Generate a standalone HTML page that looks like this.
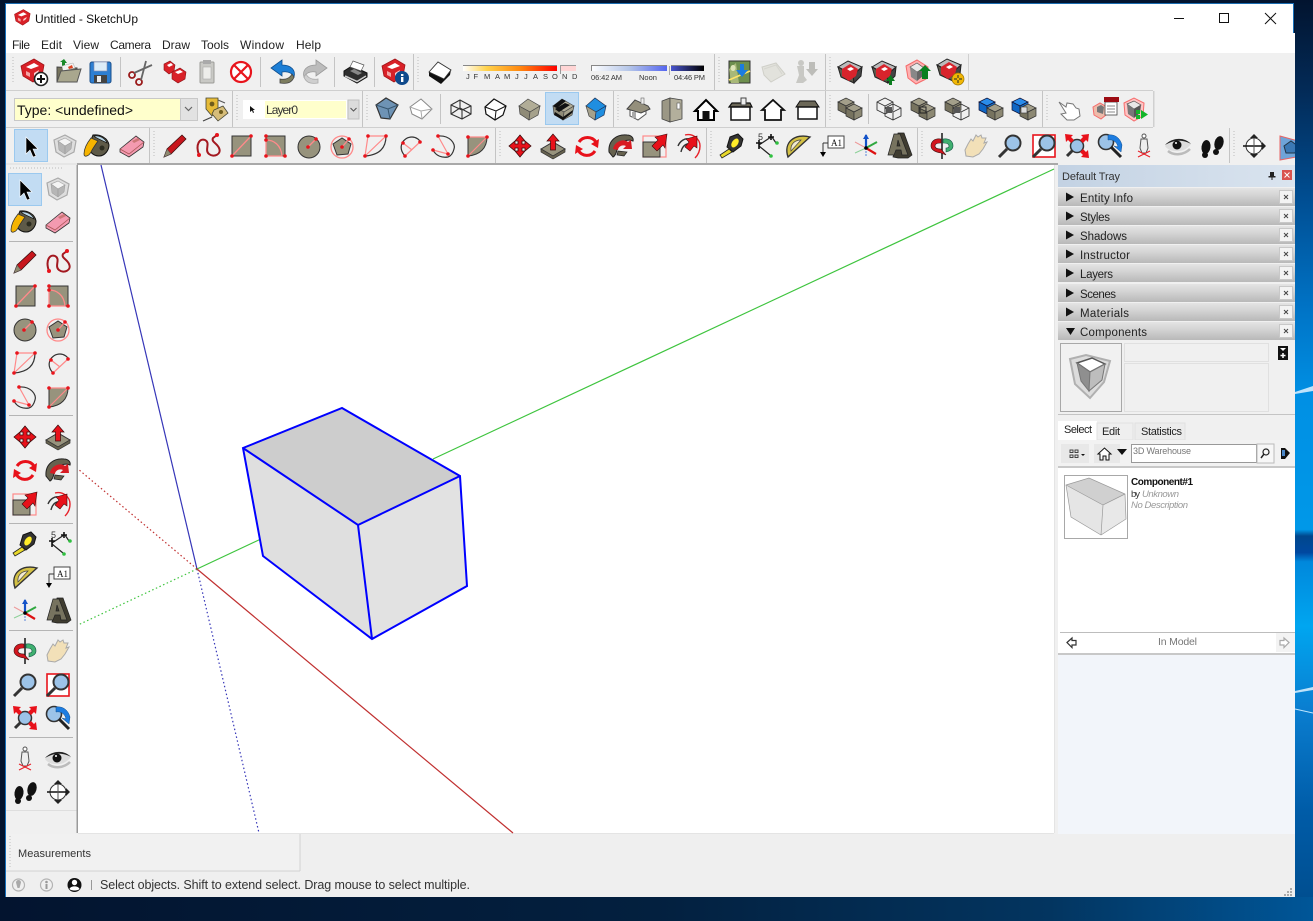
<!DOCTYPE html>
<html><head><meta charset="utf-8"><title>Untitled - SketchUp</title>
<style>
html,body{margin:0;padding:0;width:1313px;height:921px;overflow:hidden;background:#03142f}
svg{display:block}
text{font-family:"Liberation Sans",sans-serif;fill:#222}
</style></head><body>
<svg xmlns="http://www.w3.org/2000/svg" width="1313" height="921" viewBox="0 0 1313 921">
<defs>
<linearGradient id="bgR" x1="0" y1="0" x2="0" y2="1">
<stop offset="0" stop-color="#02142f"/><stop offset=".1" stop-color="#032b58"/><stop offset=".22" stop-color="#004f94"/><stop offset=".33" stop-color="#0072c4"/><stop offset=".43" stop-color="#0090e4"/><stop offset=".575" stop-color="#0098e8"/><stop offset=".582" stop-color="#00478c"/><stop offset=".6" stop-color="#0048a0"/><stop offset=".61" stop-color="#0088dc"/><stop offset=".68" stop-color="#00a6f0"/><stop offset=".77" stop-color="#0a7ed0"/><stop offset=".88" stop-color="#005ca8"/><stop offset="1" stop-color="#004b8a"/>
</linearGradient>
<linearGradient id="bgB" x1="0" y1="0" x2="1" y2="0">
<stop offset="0" stop-color="#03142f"/><stop offset=".5" stop-color="#03203f"/><stop offset=".8" stop-color="#033560"/><stop offset="1" stop-color="#005698"/>
</linearGradient>
<linearGradient id="bar" x1="0" y1="0" x2="0" y2="1"><stop offset="0" stop-color="#e4e4e4"/><stop offset=".45" stop-color="#d2d2d2"/><stop offset="1" stop-color="#b8b8b8"/></linearGradient>
<linearGradient id="hdr" x1="0" y1="0" x2="1" y2="0"><stop offset="0" stop-color="#c3d2e3"/><stop offset="1" stop-color="#dae4ef"/></linearGradient>
<linearGradient id="mon" x1="0" y1="0" x2="1" y2="0"><stop offset="0" stop-color="#fff"/><stop offset=".25" stop-color="#ffd34d"/><stop offset=".6" stop-color="#ff8a10"/><stop offset="1" stop-color="#f00"/></linearGradient>
<linearGradient id="tm1" x1="0" y1="0" x2="1" y2="0"><stop offset="0" stop-color="#fff"/><stop offset=".5" stop-color="#b5c6e8"/><stop offset="1" stop-color="#5566f0"/></linearGradient>
<linearGradient id="tm2" x1="0" y1="0" x2="1" y2="0"><stop offset="0" stop-color="#4a55d0"/><stop offset="1" stop-color="#000"/></linearGradient>

<g id="su"><path d="M-11,-4 L2,-11 L12,-5 L10,6 L1,12 L-9,6Z" fill="#d92128" stroke="#a01418" stroke-width=".8"/><path d="M-6,-3 L2,-7 L7,-4 L-1,-1Z" fill="#fff"/><path d="M-6,1 L-2,3 L-2,7 L-6,5Z" fill="#f4a5a5"/><path d="M2,3 L7,0 L6,3 L2,6Z" fill="#ffd0d0"/></g>
<g id="new"><use href="#su" x="-2" y="-2"/><circle cx="7" cy="7" r="6.5" fill="#fff" stroke="#222" stroke-width="1.6"/><path d="M3,7H11M7,3V11" stroke="#111" stroke-width="2"/></g>
<g id="open"><path d="M-11,-5 L-11,10 L9,10 L9,-4 Z" fill="#77745e" stroke="#444"/><path d="M-8,-10 L-4,-13 L-1,-9 L-3,-9 L-3,-6 L-6,-6 L-6,-10Z" fill="#1a8a2a"/><path d="M-6,-6 L5,-9 L7,-4 L-5,-1Z" fill="#f3f3f3" stroke="#aaa" stroke-width=".5"/><path d="M0,-5 L4,-7 L5,-4 L1,-3Z" fill="#d42"/><path d="M-11,10 L-7,-1 L13,-3 L9,10Z" fill="#a9a78e" stroke="#555"/></g>
<g id="save"><rect x="-10" y="-10" width="21" height="21" rx="2" fill="#2d7fd3" stroke="#1c4f8a"/><rect x="-6" y="-10" width="13" height="9" fill="#dcecf8" stroke="#88a"  stroke-width=".6"/><rect x="-6" y="3" width="13" height="8" fill="#444"/><rect x="-3" y="4" width="4" height="6" fill="#eee"/></g>
<g id="sci"><circle cx="-9" cy="3" r="3" fill="none" stroke="#9a1a1a" stroke-width="1.800"/><circle cx="-2" cy="10" r="3" fill="none" stroke="#9a1a1a" stroke-width="1.800"/><path d="M-7,1 L11,-7 M0,8 L5,-11" stroke="#666" stroke-width="1.800"/></g>
<g id="copy"><path d="M-11,-8 L-5,-11 L0,-7 L-1,-1 L-6,2 L-11,-2Z" fill="#d92128" stroke="#8c1014" stroke-width=".6"/><path d="M-8,-7 L-4,-9 L-2,-7 L-6,-5Z" fill="#fff"/><path d="M-3,0 L5,-4 L11,0 L10,7 L3,11 L-3,7Z" fill="#d92128" stroke="#8c1014" stroke-width=".6"/><path d="M0,0 L5,-2 L8,0 L3,2Z" fill="#fff"/></g>
<g id="paste"><rect x="-7" y="-10" width="14" height="21" rx="1" fill="#c9c9c5" stroke="#9c9c98"/><rect x="-4" y="-12" width="8" height="4" fill="#aaa"/><rect x="-4" y="-5" width="8" height="12" fill="#ededea" stroke="#aaa" stroke-width=".6"/></g>
<g id="erase"><circle r="10" fill="#fff" stroke="#e8141c" stroke-width="2.200"/><path d="M-6.500,-6.500L6.500,6.500M6.500,-6.500L-6.500,6.500" stroke="#e8141c" stroke-width="2.200"/></g>
<g id="undo"><path d="M-1,-12 L-1,-7 C8,-7 13,-2 11,5 C9,1 5,-1 -1,0 L-1,4 L-12,-4Z" fill="#1d7fd6" stroke="#0f4d8c" stroke-width=".8"/><path d="M11,5 C9,11 3,12 -3,11 L-3,7 C3,8 7,6 9,2Z" fill="#7d7d5f" stroke="#444" stroke-width=".8"/></g>
<g id="redo"><path d="M1,-12 L1,-7 C-8,-7 -13,-2 -11,5 C-9,1 -5,-1 1,0 L1,4 L12,-4Z" fill="#bcbcbc" stroke="#999" stroke-width=".8"/><path d="M-11,5 C-9,11 -3,12 3,11 L3,7 C-3,8 -7,6 -9,2Z" fill="#cfcfcf" stroke="#aaa" stroke-width=".8"/></g>
<g id="print"><path d="M-12,-1 L-4,-6 L11,1 L11,5 L1,11 L-12,4Z" fill="#2e2e2e" stroke="#111"/><path d="M-3,-11 L8,-7 L5,-1 L-6,-5Z" fill="#fff" stroke="#555" stroke-width=".7"/><path d="M-6,-1 L-2,-3 L6,1 L2,3Z" fill="#888"/><path d="M-11,4 L1,9.500 L10,4" fill="none" stroke="#cfcfcf" stroke-width="1.600"/></g>
<g id="info"><use href="#su" x="-3" y="-2"/><circle cx="6" cy="6" r="7" fill="#104a8c"/><rect x="5" y="5" width="2.400" height="5" fill="#fff"/><rect x="5" y="2" width="2.400" height="2" fill="#fff"/></g>
<g id="shad"><path d="M-11,-1 L4,6 L11,-3 L10,2 L1,11 L-11,3Z" fill="#111"/><path d="M-11,-1 L-2,-11 L11,-3 L4,6Z" fill="#fff" stroke="#333" stroke-width=".9"/></g>
<g id="loc"><rect x="-10" y="-11" width="21" height="22" fill="#6e8f4e" stroke="#333"/><path d="M-10,-3 L-3,-9 L0,11 L-8,11Z" fill="#a8b878"/><path d="M-10,8 L11,-1" stroke="#ffe36a" stroke-width="1.600"/><path d="M1,-8 H5 V-2 H9 L3,5 L-3,-2 H1Z" fill="#1c7ce0"/><path d="M-6,-7a2.500 3 0 1 0 .1 0" fill="#dfe5b8"/></g>
<g id="terr"><path d="M-11,-5 L3,-9 L12,2 L-2,10 L-9,3Z" fill="#e2e2dc" stroke="#cfcfc8"/><path d="M-9,-3 L3,-7 L9,2" fill="none" stroke="#d5d5cf"/></g>
<g id="photo"><circle cx="-5" cy="-9" r="3" fill="#c8c8c4"/><path d="M-9,-6 H-2 V4 L1,8 L-3,11 H-10 L-7,3Z" fill="#c8c8c4"/><path d="M3,-10 H9 V-3 H12 L6,4 L0,-3 H3Z" fill="#bdbdb9"/></g>
<g id="w1"><path d="M-12,-5 L-2,-11 L12,-5 L3,3Z" fill="#bbb" stroke="#222"/><path d="M-12,-5 L3,3 L4,11 L-9,5Z" fill="#5d5a4c" stroke="#222"/><path d="M3,3 L12,-5 L11,4 L4,11Z" fill="#444" stroke="#222"/><path d="M-8,-3 L0,-8 L8,-3 L6,4 L-1,9 L-8,4Z" fill="#d8242c"/><path d="M-3,-3 L1,-5 L4,-3 L0,-1Z" fill="#fff"/></g>
<g id="w2"><use href="#w1"/><path d="M4,2 H7 V6 H10 L5.500,12 L1,6 H4Z" transform="translate(1,1) rotate(180 5.500 7)" fill="#0b7d1f"/></g>
<g id="w3"><path d="M-11,-6 L0,-12 L11,-5 L9,7 L-1,12 L-9,6Z" fill="#ffb0b0" stroke="#f56b6b"/><path d="M-7,-5 L0,-9 L7,-4 L0,0Z" fill="#e8e8e8" stroke="#555" stroke-width=".7"/><path d="M-7,-5 L0,0 L0,9 L-6,5Z" fill="#888"/><path d="M0,0 L7,-4 L6,4 L0,9Z" fill="#666"/><path d="M8,-7 L14,-1 H11 V7 H5 V-1 H2Z" fill="#0b8020"/></g>
<g id="w4"><use href="#w1" x="-2" y="-2"/><circle cx="7" cy="7" r="6" fill="#f2b705" stroke="#9a7400" stroke-width=".7"/><path d="M3,7 H6 M8,7 H11 M7,3 V6 M7,8V11" stroke="#442" stroke-width="1.200"/></g>
<g id="tags"><path d="M-9,-11 L3,-11 L3,0 L-3,7 L-9,0Z" fill="#e6bb38" stroke="#443" stroke-width=".8"/><circle cx="-3" cy="-5" r="2.400" fill="#6e5c1c"/><path d="M-1,1 L8,-3 L13,4 L3,12 L-3,5Z" fill="#d6bd7a" stroke="#443" stroke-width=".8"/><circle cx="6" cy="3" r="2" fill="#6e5c1c"/><path d="M3,-9 L10,-6" stroke="#555"/><path d="M-12,12 L-3,8" stroke="#444" stroke-width="1.200"/></g>
<g id="xray"><path d="M-11,-4 L-1,-11 L11,-4 L3,10 L-6,9Z" fill="#6e93b5" stroke="#333" stroke-width="1.200"/><path d="M-11,-4 L1,0 L11,-4 M1,0 L3,10" stroke="#37566f" fill="none" stroke-width="1"/></g>
<g id="back"><path d="M-11,-2 L0,-10 L11,0 L1,10 L-9,5Z" fill="#fff" stroke="#888"/><path d="M-11,-2 L0,2 L11,0 M0,2 L1,10" stroke="#aaa" fill="none"/></g>
<g id="wire"><path d="M-10,-4 L-1,-9 L10,-3 L10,5 L1,10 L-10,5Z M-10,-4 L1,1 L10,-3 M1,1 V10 M-1,-9 V-1 L-10,5 M-1,-1 L10,5" fill="none" stroke="#333" stroke-width="1.100"/></g>
<g id="hid"><path d="M-10,-2 L-1,-10 L11,-3 L8,6 L0,11 L-9,5Z" fill="#fff" stroke="#111" stroke-width="1.200"/><path d="M-10,-2 L1,2 L11,-3 M1,2 L0,11" fill="none" stroke="#111"/></g>
<g id="shd"><path d="M-10,-3 L-1,-10 L11,-3 L1,3Z" fill="#b1ad97" stroke="#444" stroke-width=".7"/><path d="M-10,-3 L1,3 L0,11 L-9,5Z" fill="#8f8b78" stroke="#444" stroke-width=".7"/><path d="M1,3 L11,-3 L9,6 L0,11Z" fill="#a5a18c" stroke="#444" stroke-width=".7"/></g>
<g id="tex"><use href="#shd"/><path d="M-10,-3 L-1,-10 L3,-8 L-6,-1Z M-8,0 L2,-6 L7,-4 L-4,3 Z M-8,3 L0,8 L10,1 L9,4 L0,11 L-9,6Z" fill="#111"/></g>
<g id="mono"><path d="M-9,-3 L0,-11 L11,-3 L1,3Z" fill="#1f8ee0" stroke="#235" stroke-width=".7"/><path d="M-9,-3 L1,3 L0,11 L-6,7Z" fill="#a5a18c" stroke="#444" stroke-width=".7"/><path d="M1,3 L11,-3 L9,6 L0,11Z" fill="#1f8ee0" stroke="#235" stroke-width=".7"/></g>
<g id="h1"><path d="M-8,-1 L-8,7 L0,11 L8,5 L8,-1 L2,3Z" fill="#fff" stroke="#555"/><path d="M-11,0 L-3,-9 L10,-3 L12,0 L3,4 Z" fill="#948f7c" stroke="#444"/><rect x="-6" y="3" width="4" height="6" fill="#aaa"/><rect x="3" y="-11" width="3" height="6" fill="#eee" stroke="#666" stroke-width=".6"/></g>
<g id="h2"><path d="M-11,-8 L-3,-11 L-3,13 L-11,10Z" fill="#9b9785" stroke="#444" stroke-width=".8"/><path d="M-3,-11 L9,-9 L9,10 L-3,13Z" fill="#b3af9c" stroke="#444" stroke-width=".8"/><rect x="4" y="-6" width="3" height="6" fill="#fff" stroke="#555" stroke-width=".6"/></g>
<g id="h3"><path d="M-11,2 L0,-9 L11,2 L8,2 L8,11 L-8,11 L-8,2Z" fill="#fff" stroke="#000" stroke-width="2"/><rect x="-3.500" y="2" width="7" height="9" fill="#111"/></g>
<g id="h4"><path d="M-11,-2 L-8,-6 L10,-6 L12,-2Z" fill="#6b6757" stroke="#111" stroke-width="1.200"/><rect x="-9" y="-2" width="19" height="13" fill="#fff" stroke="#111" stroke-width="1.500"/><rect x="1" y="-11" width="5" height="7" fill="#eee" stroke="#444"/></g>
<g id="h5"><path d="M-11,1 L0,-9 L11,1 L8,1 L8,11 L-8,11 L-8,1Z" fill="#fff" stroke="#111" stroke-width="1.800"/></g>
<g id="h6"><path d="M-11,-2 L-7,-8 L8,-8 L12,-2Z" fill="#6b6757" stroke="#111"/><rect x="-9" y="-2" width="19" height="12" fill="#fff" stroke="#111" stroke-width="1.500"/></g>

<g id="c1"><path d="M-8,-4 L0,-8 L8,-4 L0,0Z" fill="#a39f8a" stroke="#333" stroke-width=".7"/><path d="M-8,-4 L0,0 L0,8 L-8,4Z" fill="#77735f" stroke="#333" stroke-width=".7"/><path d="M0,0 L8,-4 L8,4 L0,8Z" fill="#8c8873" stroke="#333" stroke-width=".7"/></g>
<g id="c2"><path d="M-8,-4 L0,-8 L8,-4 L0,0Z" fill="#2a8cea" stroke="#113" stroke-width=".7"/><path d="M-8,-4 L0,0 L0,8 L-8,4Z" fill="#0f66c4" stroke="#113" stroke-width=".7"/><path d="M0,0 L8,-4 L8,4 L0,8Z" fill="#1478dc" stroke="#113" stroke-width=".7"/></g>
<g id="c3"><path d="M-8,-4 L0,-8 L8,-4 L8,4 L0,8 L-8,4Z M-8,-4 L0,0 L8,-4 M0,0 V8" fill="none" stroke="#333" stroke-width=".9"/></g>
<g id="s0"><use href="#c1" x="-4" y="-3"/><use href="#c1" x="4" y="3"/></g>
<g id="s1"><use href="#c3" x="-4" y="-3"/><use href="#c3" x="4" y="3"/><rect x="-3" y="-2" width="6" height="6" fill="#555"/></g>
<g id="s2"><use href="#s0"/><rect x="-3" y="-2" width="6" height="6" fill="none" stroke="#222"/></g>
<g id="s3"><use href="#c1" x="-4" y="-3"/><use href="#c3" x="4" y="3"/><rect x="-3" y="-2" width="6" height="6" fill="#555"/></g>
<g id="s4"><use href="#c2" x="-4" y="-3"/><use href="#c1" x="4" y="3"/></g>
<g id="s5"><use href="#s4"/><rect x="-3" y="-2" width="6" height="6" fill="#ddd" stroke="#333" stroke-width=".6"/></g>
<g id="hand0"><path d="M-11,-8 L-4,-3 L-3,-7 L3,-6 L6,-2 L9,-1 L10,6 L4,10 L-3,10 L-9,4 L-4,3 Z" fill="#fff" stroke="#777"/></g>
<g id="cw1"><path d="M-12,-2 L-5,-6 L2,-2 L1,6 L-4,10 L-11,6Z" fill="#eba" stroke="#f56b6b"/><path d="M-8,-2 L-4,-4 L-1,-2 L-2,5 L-8,3Z" fill="#777"/><rect x="0" y="-7" width="12" height="13" fill="#fff" stroke="#444" stroke-width=".8"/><path d="M2,-3H10M2,0H10M2,3H10" stroke="#888"/><rect x="-1" y="-12" width="15" height="5" fill="#9c0b12"/></g>
<g id="cw2"><path d="M-11,-6 L-1,-11 L9,-6 L8,7 L-1,12 L-10,6Z" fill="#ffc4c4" stroke="#f56b6b"/><path d="M-8,-5 L-1,-8 L6,-4 L-1,0Z" fill="#e8e8e8" stroke="#555" stroke-width=".7"/><path d="M-8,-5 L-1,0 L-1,9 L-7,5Z" fill="#777"/><path d="M-1,0 L6,-4 L5,4 L-1,9Z" fill="#555"/><rect x="1" y="1" width="4" height="4" fill="#12b52a"/><rect x="1" y="6" width="4" height="4" fill="#12b52a"/><path d="M6,1 L13,5.500 L6,10Z" fill="#12b52a"/></g>

<g id="arrow"><path d="M-5,-10 L-5,7 L-1,3 L2,10 L5,9 L2,2 L7,2Z" fill="#000" stroke="#fff" stroke-width=".6"/></g>
<g id="comp"><path d="M-11,-6 L0,-11 L11,-5 L9,6 L-1,11 L-9,6Z" fill="#dedede" stroke="#a9a9a9" stroke-width="1.200"/><path d="M-7,-5 L0,-8 L7,-4 L0,0Z" fill="#f4f4f4" stroke="#aaa" stroke-width=".7"/><path d="M-7,-5 L0,0 L0,8 L-6,4Z M0,0 L7,-4 L6,3 L0,8Z" fill="#b6b6b6" stroke="#999" stroke-width=".5"/></g>
<g id="paint"><path d="M-4,-11 C3,-12 11,-8 12,-1 C12,4 8,10 2,10 C-4,10 -9,5 -8,-1Z" fill="#5e5a48" stroke="#111"/><path d="M-3,-10 C2,-11 8,-8 10,-3 C5,-6 0,-7 -3,-10Z" fill="#bbd8e8" stroke="#111" stroke-width=".7"/><path d="M-6,-8 C-10,-3 -13,2 -13,8 C-13,12 -8,10 -6,6 C-4,2 -1,-2 1,-5Z" fill="#f6b400" stroke="#333" stroke-width=".8"/><circle cx="5" cy="2" r="2.500" fill="#2c2c20"/></g>
<g id="eraser"><path d="M-12,3 L4,-10 L12,-4 L11,1 L-3,11 L-12,6Z" fill="#f49ab0" stroke="#333" stroke-width=".8"/><path d="M-12,3 L-3,8 L12,-4" fill="none" stroke="#a55" stroke-width=".8"/><path d="M0,-5 L6,-8 L8,-6 L2,-3Z" fill="#c77"/></g>
<g id="pencil"><path d="M-11,11 L-8,3 L7,-11 L11,-7 L-4,8Z" fill="#c8161d" stroke="#401010" stroke-width=".8"/><path d="M-11,11 L-8,3 L-4,8Z" fill="#8f8a70" stroke="#444" stroke-width=".5"/></g>
<g id="free"><path d="M-9,9 C-13,-2 -8,-8 -3,-6 C3,-3 -4,4 1,8 C6,12 14,8 11,2 C9,-3 3,-4 5,-8 L9,-11" fill="none" stroke="#a31820" stroke-width="2"/><circle cx="-9" cy="9" r="2" fill="#e8141c"/><circle cx="9" cy="-11" r="2" fill="#e8141c"/></g>
<g id="rect"><rect x="-9" y="-10" width="19" height="20" fill="#97937d" stroke="#333"/><path d="M-9,10 L10,-10" stroke="#ff8a8a" stroke-width="1.300"/><circle cx="-9" cy="10" r="1.800" fill="#e8141c"/><circle cx="10" cy="-10" r="1.800" fill="#e8141c"/></g>
<g id="rrect"><rect x="-9" y="-10" width="19" height="20" fill="#97937d" stroke="#333"/><path d="M-9,-6 C-1,-6 6,-1 7,10 H-9 Z" fill="none" stroke="#ff8a8a" stroke-width="1.300"/><circle cx="-9" cy="-10" r="1.800" fill="#e8141c"/><circle cx="-9" cy="-6" r="1.800" fill="#e8141c"/><circle cx="-9" cy="10" r="1.800" fill="#e8141c"/><circle cx="10" cy="10" r="1.800" fill="#e8141c"/></g>
<g id="circ"><circle r="11" cy="1" fill="#97937d" stroke="#333"/><path d="M-1,1 L7,-7" stroke="#ff8a8a" stroke-width="1.300"/><circle cx="-1" cy="1" r="1.800" fill="#e8141c"/><circle cx="7" cy="-7" r="1.800" fill="#e8141c"/></g>
<g id="poly"><circle r="11" cy="1" fill="none" stroke="#ff8a8a" stroke-width="1.300"/><path d="M-9,-2 L0,-8 L9,-2 L6,8 L-5,9Z" fill="#97937d" stroke="#333"/><path d="M0,1 L7,-7" stroke="#ff8a8a" stroke-width="1.300"/><circle cy="1" r="1.800" fill="#e8141c"/><circle cx="7" cy="-7" r="1.800" fill="#e8141c"/></g>
<g id="arc1"><path d="M-11,10 C3,9 10,2 10,-10" fill="none" stroke="#333" stroke-width="1.200"/><path d="M-8,-10 H10 L-11,10 Z" fill="none" stroke="#ff8a8a" stroke-width="1.200"/><circle cx="-8" cy="-10" r="1.800" fill="#e8141c"/><circle cx="10" cy="-10" r="1.800" fill="#e8141c"/><circle cx="-11" cy="10" r="1.800" fill="#e8141c"/></g>
<g id="arc2"><path d="M-5,10 C-13,1 -7,-9 2,-9 C6,-9 10,-6 10,-4" fill="none" stroke="#333" stroke-width="1.200"/><path d="M-5,10 L10,-4 M-7,-3 L2,4" fill="none" stroke="#ff8a8a" stroke-width="1.200"/><circle cx="-5" cy="10" r="1.800" fill="#e8141c"/><circle cx="10" cy="-4" r="1.800" fill="#e8141c"/><circle cx="-7" cy="-3" r="1.800" fill="#e8141c"/></g>
<g id="arc3"><path d="M-6,-10 C6,-11 12,-2 10,3 C9,7 7,10 4,11" fill="none" stroke="#333" stroke-width="1.200"/><path d="M-6,-10 L4,8 L-11,4" fill="none" stroke="#ff8a8a" stroke-width="1.200"/><path d="M-11,4 C-8,10 -2,12 4,11" fill="none" stroke="#333" stroke-width="1.200"/><circle cx="-6" cy="-10" r="1.800" fill="#e8141c"/><circle cx="4" cy="8" r="1.800" fill="#e8141c"/><circle cx="-11" cy="4" r="1.800" fill="#e8141c"/></g>
<g id="pie"><path d="M-9,-9 H10 C10,2 3,9 -9,10Z" fill="#97937d" stroke="#333"/><path d="M-9,10 L10,-9 M-9,-9 H10" stroke="#ff8a8a" stroke-width="1.200"/><circle cx="-9" cy="-9" r="1.800" fill="#e8141c"/><circle cx="10" cy="-9" r="1.800" fill="#e8141c"/><circle cx="-9" cy="10" r="1.800" fill="#e8141c"/></g>
<g id="move"><path d="M0,-11 L-5,-5 H-2 V-2 H-5 V-5 L-11,0 L-5,5 V2 H-2 V5 H-5 L0,11 L5,5 H2 V2 H5 V5 L11,0 L5,-5 V-2 H2 V-5 H5Z" fill="#e8111a" stroke="#3a0a0a" stroke-width=".8"/></g>
<g id="push"><path d="M-12,3 L0,-4 L12,3 L0,10Z" fill="#97937d" stroke="#333"/><path d="M-12,3 V6 L0,13 L12,6 V3 L0,10Z" fill="#66624f" stroke="#333" stroke-width=".7"/><path d="M0,-12 L-6,-5 H-2.500 V4 H2.500 V-5 H6Z" fill="#e8111a" stroke="#3a0a0a" stroke-width=".7"/></g>
<g id="rot"><path d="M-8,-4 C-4,-10 5,-10 9,-4" fill="none" stroke="#e8111a" stroke-width="3"/><path d="M12,-7 L11,2 L4,-2Z" fill="#e8111a"/><path d="M8,5 C4,11 -5,11 -9,4" fill="none" stroke="#e8111a" stroke-width="3"/><path d="M-12,8 L-11,-1 L-4,3Z" fill="#e8111a"/></g>
<g id="fol"><path d="M-12,6 C-13,-6 -4,-12 6,-11 C10,-11 13,-8 12,-5 C8,-7 -3,-5 -4,3 C-4,6 -6,10 -8,11 Z" fill="#66624f" stroke="#222"/><path d="M-8,3 C-7,-4 2,-8 7,-4 L10,-6 L11,3 L2,3 L5,0 C1,-2 -3,1 -3,4 Z" fill="#d81b22"/><path d="M-3,5 L6,6 L3,10 L-4,9Z" fill="#66624f" stroke="#222" stroke-width=".7"/></g>
<g id="scale"><rect x="-12" y="-10" width="23" height="21" fill="none" stroke="#ff8a8a" stroke-width="1.200"/><rect x="-12" y="-4" width="17" height="15" fill="#97937d" stroke="#333"/><path d="M12,-12 L0,-9 L3,-6 L-3,0 L2,5 L8,-1 L10,2Z" fill="#e8111a" stroke="#3a0a0a" stroke-width=".6"/></g>
<g id="offs"><path d="M-3,-11 C5,-13 12,-7 12,0 C12,5 10,9 7,12" fill="none" stroke="#e8222a" stroke-width="1.400"/><path d="M-10,0 C-8,-5 -3,-8 0,-7 M-7,6 C-6,1 -3,-2 0,-2" fill="none" stroke="#333" stroke-width="1.400"/><path d="M9,-10 L-2,-7 L1,-4 L-3,1 L2,5 L6,0 L9,2Z" fill="#e8111a" stroke="#3a0a0a" stroke-width=".6"/></g>
<g id="tape"><path d="M-2,-9 L6,-12 L11,-7 L9,0 L1,6 L-5,1Z" fill="#333" stroke="#111"/><ellipse cx="3" cy="-3" rx="3" ry="5" transform="rotate(35 3 -3)" fill="#ffec29"/><path d="M-3,3 L-12,9 L-10,12 L0,6Z" fill="#e8d82a" stroke="#222" stroke-width=".8"/></g>
<g id="guide"><path d="M-6,-1 L6,-9 M-6,0 L5,9 M7,-9 L11,-3" stroke="#222" stroke-width="1.200" fill="none"/><path d="M-9,-3 H-3 M-6,-6 V3 M3,-9 H9 M6,-12 V-6" stroke="#111" stroke-width="1.600"/><circle cx="6" cy="10" r="1.800" fill="#30c040"/><circle cx="12" cy="-3" r="1.800" fill="#30c040"/><text x="-7" y="-6" font-size="9" style="fill:#333">5</text></g>
<g id="prot"><path d="M-10,11 C-15,-4 -3,-13 12,-9 Z" fill="#d4c145" stroke="#333" stroke-width="1.400"/><path d="M-7,5 C-8,-2 -3,-6 3,-6 Z" fill="#f2ead0" stroke="#444" stroke-width=".7"/></g>
<g id="txt"><rect x="-4" y="-10" width="16" height="12" fill="#fff" stroke="#444"/><text x="-1" y="0" font-size="9" style="font-family:'Liberation Serif',serif;fill:#111">A1</text><path d="M-9,-3 V7 M-4,-3 H-9" stroke="#333"/><path d="M-12,6 H-6 L-9,11Z" fill="#000"/></g>
<g id="axes"><path d="M0,2 V-11" stroke="#1252c8" stroke-width="2.200"/><path d="M-3,-7 L0,-12 L3,-7Z" fill="#1252c8"/><path d="M0,2 V11" stroke="#8aa7e0" stroke-width="1.500" stroke-dasharray="2 1"/><path d="M0,2 L11,-4" stroke="#30a840" stroke-width="2"/><path d="M0,2 L-11,7" stroke="#8cd098" stroke-width="1"/><path d="M0,2 L10,8" stroke="#dd1111" stroke-width="2.200"/><path d="M0,2 L-11,-4" stroke="#ee9999" stroke-width="1"/><circle cy="2" r="1.800" fill="#000"/></g>
<g id="t3d"><path d="M-6,11 L-1,-13 L5,-13 L13,9 L9,12 L-1,12Z" fill="#3f3c30" stroke="#222" stroke-width=".7"/><path fill-rule="evenodd" d="M-11,9 L-5,-12 L1,-12 L9,9 L3,9 L2,4 L-3,4 L-5,9Z M-2,0 L1,0 L-1,-6Z" fill="#77735f" stroke="#222" stroke-width=".7"/></g>
<g id="orbit"><path d="M0,-13 V13" stroke="#222" stroke-width="1.600"/><path d="M-1,-7 C-8,-8 -11,-4 -11,0 C-11,3 -8,6 -1,7 L4,9 L-1,3 C-5,3 -7,2 -7,0 C-7,-2 -5,-3 -1,-3Z" fill="#d2161e" stroke="#411" stroke-width=".6"/><path d="M1,-7 C8,-8 11,-4 11,0 C11,3 8,5 4,6 L4,2 C6,2 7,1 7,0 C7,-2 5,-3 1,-3Z" fill="#40b070" stroke="#154" stroke-width=".6"/></g>
<g id="pan"><path d="M-10,10 L-11,4 L-8,-2 L-5,-7 L-3,-5 L0,-11 L2,-9 L5,-11 L6,-8 L10,-8 L8,-3 L11,-4 L7,3 L3,8 L-3,11Z" fill="#f2e0b8" stroke="#aaa"/></g>
<g id="zoom"><circle cx="3" cy="-3" r="7.500" fill="#9cc3e8" stroke="#333" stroke-width="2"/><path d="M-3,3 L-11,11" stroke="#333" stroke-width="3"/></g>
<g id="zoomw"><rect x="-11" y="-11" width="22" height="22" fill="#fff" stroke="#e8141c" stroke-width="1.600"/><use href="#zoom"/></g>
<g id="zoome"><path d="M-3,3 L-10,10" stroke="#333" stroke-width="3"/><circle cx="0" cy="0" r="6.500" fill="#9cc3e8" stroke="#333" stroke-width="1.500"/><path d="M-12,-12 L-4,-11 L-6,-9 L-3,-6 L-6,-3 L-9,-6 L-11,-4Z M12,-12 L4,-11 L6,-9 L3,-6 L6,-3 L9,-6 L11,-4Z M12,12 L4,11 L6,9 L3,6 L6,3 L9,6 L11,4Z" fill="#e8111a"/></g>
<g id="prev"><circle cx="-4" cy="-4" r="7.500" fill="#9cc3e8" stroke="#333" stroke-width="1.600"/><path d="M-2,-11 L-2,-6 C3,-7 7,-4 8,1 L4,0 L11,6 L12,-1 C10,-8 5,-12 -2,-11Z" fill="#1c7ce0" stroke="#0f4d8c" stroke-width=".5"/><path d="M1,1 L11,11" stroke="#222" stroke-width="3"/></g>
<g id="walk"><ellipse cy="-10" rx="2" ry="2" fill="#fff" stroke="#555"/><path d="M-3,-7 H3 L4,2 L2,7 H-2 L-4,2Z" fill="#eee" stroke="#555"/><path d="M-6,11 L6,5 M-6,5 L6,11" stroke="#e8222a" stroke-width="1.200"/></g>
<g id="eye"><path d="M-13,0 C-7,-9 6,-10 13,-2 C9,3 4,6 -3,5 C-7,5 -11,3 -13,0Z" fill="#ddd"/><path d="M-13,-1 C-7,-8 6,-10 13,-2 C6,-6 -3,-7 -13,-1Z" fill="#222"/><circle cx="-1" cy="-1" r="4.500" fill="#111"/><circle cx="-2" cy="-3" r="1" fill="#fff"/><path d="M-10,5 C-4,10 6,9 12,3" fill="none" stroke="#bbb" stroke-width="2.500"/></g>
<g id="foot"><ellipse cx="-6" cy="1" rx="4.500" ry="7" transform="rotate(8 -6 1)" fill="#111"/><ellipse cx="-7" cy="9" rx="3" ry="3" fill="#111"/><ellipse cx="7" cy="-3" rx="4.500" ry="7" transform="rotate(15 7 -3)" fill="#111"/><ellipse cx="4" cy="6" rx="3" ry="3" fill="#111"/></g>
<g id="sect"><circle r="8" fill="#fff" stroke="#333"/><path d="M-11,0 H8" stroke="#111" stroke-width="1.500"/><path d="M8,-4 L12,0 L8,4Z M0,-12 L-4,-8 H4Z M0,12 L-4,8 H4Z" fill="#222"/><path d="M0,-8 V8" stroke="#555"/></g>
<g id="sect2"><path d="M-8,-10 L14,-4 L14,10 L-8,14Z" fill="#6fa4d8" stroke="#e86464"/><path d="M-4,0 L3,-5 L10,0 L7,7 L-2,7Z" fill="#3b78b4" stroke="#234"/></g>
<g id="x"><rect x="-6.500" y="-6.500" width="13" height="13" fill="#f3f3f3" stroke="#c8c8c8"/><path d="M-2,-2 L2,2 M2,-2 L-2,2" stroke="#444"/></g>
<g id="tri"><path d="M-4,-4.500 L4,0 L-4,4.500Z" fill="#111"/></g>
<g id="grip"><path d="M0,0 V26" stroke="#bbb" stroke-width="1" stroke-dasharray="1 2"/></g>
<g id="hgrip"><path d="M0,0 H52" stroke="#bbb" stroke-width="1" stroke-dasharray="1 2"/></g>
</defs>

<rect width="1313" height="921" fill="#03142f"/>
<rect x="1295" width="18" height="921" fill="url(#bgR)"/>
<rect y="897" width="1313" height="24" fill="url(#bgB)"/>
<path d="M1295,392 L1313,386 L1313,391 L1295,394Z M1295,691 L1313,687 L1313,690 L1295,693Z" fill="#dff2ff" opacity=".85"/>
<path d="M1295,709 L1313,713" stroke="#bfe6ff" stroke-width="1"/>

<rect x="5" y="3" width="1288" height="50" fill="#fff"/>
<rect x="5" y="33" width="1290" height="20" fill="#fff"/>
<rect x="5" y="53" width="1290" height="844" fill="#f0f0f0"/>
<rect x="5" y="3" width="1288" height="1" fill="#1a6cb0"/>
<rect x="5" y="3" width="1" height="894" fill="#1670bb"/>
<rect x="1293" y="3" width="1" height="30" fill="#1670bb"/>

<g transform="translate(22,17) scale(.68)"><use href="#su"/></g>
<text x="35" y="23" font-size="12" textLength="103" style="fill:#111">Untitled - SketchUp</text>
<rect x="1174" y="18" width="10" height="1" fill="#111"/>
<rect x="1219.500" y="13.500" width="9" height="9" fill="none" stroke="#111"/>
<path d="M1265,13 L1276,24 M1276,13 L1265,24" stroke="#111"/>

<g font-size="12">
<text x="12" y="49" textLength="18">File</text>
<text x="41" y="49" textLength="21">Edit</text>
<text x="73" y="49" textLength="26">View</text>
<text x="110" y="49" textLength="41">Camera</text>
<text x="162" y="49" textLength="28">Draw</text>
<text x="201" y="49" textLength="28">Tools</text>
<text x="240" y="49" textLength="44">Window</text>
<text x="296" y="49" textLength="25">Help</text>
</g>

<rect x="6" y="90" width="1147" height="1" fill="#cfcfcf"/>
<rect x="6" y="127" width="1147" height="1" fill="#cfcfcf"/>
<rect x="968" y="54" width="1" height="36" fill="#d0d0d0"/>
<rect x="1153" y="91" width="1.500" height="36" fill="#d0d0d0"/>
<rect x="77" y="163" width="981" height="2" fill="#a9a9a9"/>
<rect x="6" y="163" width="71" height="2" fill="#e6e6e6"/>
<g fill="#c4c4c4">
<rect x="120" y="57" width="1" height="30"/><rect x="260" y="57" width="1" height="30"/><rect x="334" y="57" width="1" height="30"/><rect x="374" y="57" width="1" height="30"/><rect x="413" y="54" width="1" height="36"/><rect x="714" y="54" width="1" height="36"/><rect x="825" y="54" width="1" height="36"/>
<rect x="232" y="91" width="1" height="36"/><rect x="362" y="91" width="1" height="36"/><rect x="440" y="94" width="1" height="30"/><rect x="613" y="91" width="1" height="36"/><rect x="825" y="91" width="1" height="36"/><rect x="868" y="94" width="1" height="30"/><rect x="1042" y="91" width="1" height="36"/>
<rect x="149" y="128" width="1" height="35"/><rect x="495" y="128" width="1" height="35"/><rect x="706" y="128" width="1" height="35"/><rect x="917" y="128" width="1" height="35"/><rect x="1229" y="128" width="1" height="35"/>
</g>
<use href="#grip" x="13" y="57"/><use href="#grip" x="418" y="57"/><use href="#grip" x="719" y="57"/><use href="#grip" x="830" y="57"/>
<use href="#grip" x="237" y="95"/><use href="#grip" x="367" y="95"/><use href="#grip" x="618" y="95"/><use href="#grip" x="830" y="95"/><use href="#grip" x="1047" y="95"/>
<use href="#grip" x="154" y="131"/><use href="#grip" x="500" y="131"/><use href="#grip" x="711" y="131"/><use href="#grip" x="922" y="131"/><use href="#grip" x="1234" y="131"/>

<use href="#new" x="34" y="72"/><use href="#open" x="68" y="72"/><use href="#save" x="100" y="72"/>
<use href="#sci" x="141" y="72"/><use href="#copy" x="175" y="72"/><use href="#paste" x="207" y="72"/><use href="#erase" x="241" y="72"/>
<use href="#undo" x="283" y="72"/><use href="#redo" x="315" y="72"/><use href="#print" x="356" y="72"/><use href="#info" x="396" y="72"/>
<use href="#shad" x="440" y="73"/>
<rect x="463" y="65" width="94" height="6" fill="url(#mon)"/><rect x="463" y="65" width="94" height="1" fill="#888"/>
<rect x="561" y="65" width="15" height="6" fill="#ffd5d5"/><rect x="561" y="65" width="15" height="1" fill="#999"/><rect x="560" y="65" width="1" height="9" fill="#999"/>
<g font-size="7.500"><text x="466" y="79" style="fill:#333">J</text><text x="473.500" y="79" style="fill:#333">F</text><text x="484" y="79" style="fill:#333">M</text><text x="495" y="79" style="fill:#333">A</text><text x="504" y="79" style="fill:#333">M</text><text x="515" y="79" style="fill:#333">J</text><text x="524" y="79" style="fill:#333">J</text><text x="533" y="79" style="fill:#333">A</text><text x="543" y="79" style="fill:#333">S</text><text x="552" y="79" style="fill:#333">O</text><text x="562" y="79" style="fill:#333">N</text><text x="572" y="79" style="fill:#333">D</text></g>
<rect x="591" y="66" width="76" height="5" fill="url(#tm1)"/><rect x="591" y="65" width="76" height="1" fill="#888"/><rect x="591" y="65" width="1" height="6" fill="#888"/>
<rect x="671" y="66" width="33" height="5" fill="url(#tm2)"/><rect x="671" y="65" width="33" height="1" fill="#888"/><rect x="669" y="66" width="1" height="9" fill="#aaa"/>
<g font-size="7.500"><text x="591" y="80" textLength="31" style="fill:#333">06:42 AM</text><text x="639" y="80" style="fill:#333">Noon</text><text x="674" y="80" textLength="31" style="fill:#333">04:46 PM</text></g>
<use href="#loc" x="739" y="72"/><use href="#terr" x="773" y="72"/><use href="#photo" x="806" y="72"/>
<use href="#w1" x="850" y="72"/><use href="#w2" x="884" y="72"/><use href="#w3" x="917" y="72"/><use href="#w4" x="951" y="72"/>

<rect x="14.500" y="98.500" width="183" height="22" fill="#ffffcc" stroke="#c8c8c8"/>
<rect x="181" y="99" width="16" height="21" fill="#e2e2e2"/><rect x="180" y="99" width="1" height="21" fill="#c8c8c8"/>
<path d="M185,107 L188.500,110.500 L192,107" fill="none" stroke="#666" stroke-width="1.200"/>
<text x="17" y="115" font-size="14" textLength="116" style="fill:#111">Type: &lt;undefined&gt;</text>
<use href="#tags" x="215" y="109"/>
<rect x="243" y="100" width="104" height="19" fill="#fff"/>
<rect x="265" y="101" width="81" height="17" fill="#ffffcc"/>
<path d="M250,106 L250,112 L252,110.500 L253,113 L254,112.500 L253,110 L255,110Z" fill="#111"/>
<text x="266" y="114" font-size="12" textLength="32" style="fill:#333">Layer0</text>
<rect x="348" y="100" width="11" height="19" fill="#dcdcdc" stroke="#c0c0c0"/>
<path d="M350.500,108 L353.500,111 L356.500,108" fill="none" stroke="#555"/>
<use href="#xray" x="387" y="109"/><use href="#back" x="421" y="109"/>
<use href="#wire" x="461" y="109"/><use href="#hid" x="495" y="109"/><use href="#shd" x="529" y="109"/>
<rect x="545.500" y="92.500" width="33" height="32" fill="#c2dcf3" stroke="#9bc9ef"/>
<use href="#tex" x="563" y="109"/><use href="#mono" x="595" y="109"/>
<use href="#h1" x="638" y="109"/><use href="#h2" x="673" y="109"/><use href="#h3" x="706" y="109"/><use href="#h4" x="740" y="109"/><use href="#h5" x="773" y="109"/><use href="#h6" x="807" y="109"/>
<use href="#s0" x="850" y="109"/><use href="#s1" x="889" y="109"/><use href="#s2" x="923" y="109"/><use href="#s3" x="957" y="109"/><use href="#s4" x="991" y="109"/><use href="#s5" x="1024" y="109"/>
<use href="#hand0" x="1070" y="110"/><use href="#cw1" x="1105" y="109"/><use href="#cw2" x="1135" y="109"/>

<rect x="14.500" y="129.500" width="33" height="32" fill="#c2dcf3" stroke="#9bc9ef"/>
<use href="#arrow" x="31" y="147"/><use href="#comp" x="65" y="146"/><use href="#paint" x="97" y="146"/><use href="#eraser" x="132" y="146"/>
<use href="#pencil" x="175" y="146"/><use href="#free" x="208" y="146"/><use href="#rect" x="241" y="146"/><use href="#rrect" x="275" y="146"/><use href="#circ" x="309" y="146"/><use href="#poly" x="342" y="146"/><use href="#arc1" x="376" y="146"/><use href="#arc2" x="410" y="146"/><use href="#arc3" x="444" y="146"/><use href="#pie" x="477" y="146"/>
<use href="#move" x="520" y="146"/><use href="#push" x="553" y="146"/><use href="#rot" x="587" y="146"/><use href="#fol" x="621" y="146"/><use href="#scale" x="655" y="146"/><use href="#offs" x="688" y="146"/>
<use href="#tape" x="732" y="146"/><use href="#guide" x="765" y="146"/><use href="#prot" x="798" y="146"/><use href="#txt" x="832" y="146"/><use href="#axes" x="866" y="146"/><use href="#t3d" x="899" y="146"/>
<use href="#orbit" x="942" y="146"/><use href="#pan" x="976" y="146"/><use href="#zoom" x="1010" y="146"/><use href="#zoomw" x="1044" y="146"/><use href="#zoome" x="1077" y="146"/><use href="#prev" x="1110" y="146"/><use href="#walk" x="1144" y="146"/><use href="#eye" x="1178" y="146"/><use href="#foot" x="1212" y="146"/><use href="#sect" x="1254" y="146"/>
<svg x="1270" y="128" width="25" height="36" overflow="hidden"><use href="#sect2" x="18" y="18"/></svg>

<use href="#hgrip" x="10" y="168"/>
<rect x="8.500" y="173.500" width="33" height="32" fill="#c2dcf3" stroke="#9bc9ef"/>
<use href="#arrow" x="25" y="190"/><use href="#comp" x="58" y="189"/><use href="#paint" x="24" y="222"/><use href="#eraser" x="58" y="222"/>
<rect x="9" y="241" width="64" height="1" fill="#b5b5b5"/>
<use href="#pencil" x="25" y="262"/><use href="#free" x="58" y="262"/><use href="#rect" x="25" y="296"/><use href="#rrect" x="58" y="296"/><use href="#circ" x="25" y="329"/><use href="#poly" x="58" y="329"/><use href="#arc1" x="25" y="363"/><use href="#arc2" x="58" y="363"/><use href="#arc3" x="25" y="397"/><use href="#pie" x="58" y="397"/>
<rect x="9" y="415" width="64" height="1" fill="#b5b5b5"/>
<use href="#move" x="25" y="437"/><use href="#push" x="58" y="437"/><use href="#rot" x="25" y="470"/><use href="#fol" x="58" y="470"/><use href="#scale" x="25" y="504"/><use href="#offs" x="58" y="504"/>
<rect x="9" y="523" width="64" height="1" fill="#b5b5b5"/>
<use href="#tape" x="25" y="544"/><use href="#guide" x="58" y="544"/><use href="#prot" x="25" y="577"/><use href="#txt" x="58" y="577"/><use href="#axes" x="25" y="611"/><use href="#t3d" x="58" y="611"/>
<rect x="9" y="630" width="64" height="1" fill="#b5b5b5"/>
<use href="#orbit" x="25" y="651"/><use href="#pan" x="58" y="651"/><use href="#zoom" x="25" y="685"/><use href="#zoomw" x="58" y="685"/><use href="#zoome" x="25" y="718"/><use href="#prev" x="58" y="718"/>
<rect x="9" y="737" width="64" height="1" fill="#b5b5b5"/>
<use href="#walk" x="25" y="759"/><use href="#eye" x="58" y="759"/><use href="#foot" x="25" y="792"/><use href="#sect" x="58" y="792"/>
<rect x="6" y="810" width="71" height="1" fill="#dedede"/>

<rect x="78" y="165" width="976" height="668" fill="#fff"/>
<rect x="76.500" y="165" width="1.500" height="668" fill="#9a9a9a"/>
<rect x="1054" y="165" width="1" height="668" fill="#e4e4e4"/>
<rect x="78" y="833" width="976" height="1" fill="#e4e4e4"/>
<path d="M101,165 L197,569" stroke="#3636b8" stroke-width="1.200"/>
<path d="M197,569 L259,833" stroke="#3636b8" stroke-width="1.200" stroke-dasharray="1.500 2.500"/>
<path d="M197,569 L263,538 M433,459 L1054,169" stroke="#3ec43e" stroke-width="1.200"/>
<path d="M197,569 L78,625" stroke="#3ec43e" stroke-width="1.200" stroke-dasharray="1.500 2.500"/>
<path d="M197,569 L513,833" stroke="#c03030" stroke-width="1.200"/>
<path d="M197,569 L78,469" stroke="#c03030" stroke-width="1.200" stroke-dasharray="1.500 2.500"/>
<path d="M243,448 L342,408 L460,476 L358,525Z" fill="#cdcdcd"/>
<path d="M243,448 L358,525 L372,639 L263,556Z" fill="#dfdfdf"/>
<path d="M358,525 L460,476 L467,586 L372,639Z" fill="#e2e2e2"/>
<path d="M243,448 L342,408 L460,476 L467,586 L372,639 L263,556Z M243,448 L358,525 L460,476 M358,525 L372,639" fill="none" stroke="#0000ff" stroke-width="2"/>

<rect x="1058" y="165" width="237" height="22" fill="url(#hdr)"/>
<text x="1062" y="180" font-size="11" textLength="58" style="fill:#333">Default Tray</text>
<path d="M1270,172 H1274 V176 H1275.500 V177.500 H1272.500 V180 H1271.500 V177.500 H1268.500 V176 H1270Z" fill="#222"/>
<rect x="1282" y="170" width="10" height="10" fill="#d9534f"/>
<path d="M1284.500,172.500 L1289.500,177.500 M1289.500,172.500 L1284.500,177.500" stroke="#fff"/>
<rect x="1058" y="188" width="237" height="18" fill="url(#bar)"/>
<rect x="1058" y="207" width="237" height="18" fill="url(#bar)"/>
<rect x="1058" y="226" width="237" height="18" fill="url(#bar)"/>
<rect x="1058" y="245" width="237" height="18" fill="url(#bar)"/>
<rect x="1058" y="264" width="237" height="18" fill="url(#bar)"/>
<rect x="1058" y="284" width="237" height="18" fill="url(#bar)"/>
<rect x="1058" y="303" width="237" height="18" fill="url(#bar)"/>
<rect x="1058" y="322" width="237" height="18" fill="url(#bar)"/>
<use href="#tri" x="1070" y="197"/><use href="#tri" x="1070" y="216"/><use href="#tri" x="1070" y="235"/><use href="#tri" x="1070" y="254"/><use href="#tri" x="1070" y="273"/><use href="#tri" x="1070" y="293"/><use href="#tri" x="1070" y="312"/>
<path d="M1066,328 H1075 L1070.500,335Z" fill="#111"/>
<g font-size="11.500">
<text x="1080" y="202" textLength="53">Entity Info</text>
<text x="1080" y="221" textLength="30">Styles</text>
<text x="1080" y="240" textLength="47">Shadows</text>
<text x="1080" y="259" textLength="50">Instructor</text>
<text x="1080" y="278" textLength="33">Layers</text>
<text x="1080" y="298" textLength="36">Scenes</text>
<text x="1080" y="317" textLength="49">Materials</text>
<text x="1080" y="336" textLength="67">Components</text>
</g>
<use href="#x" x="1286" y="197"/><use href="#x" x="1286" y="216"/><use href="#x" x="1286" y="235"/><use href="#x" x="1286" y="254"/><use href="#x" x="1286" y="273"/><use href="#x" x="1286" y="293"/><use href="#x" x="1286" y="312"/><use href="#x" x="1286" y="331"/>

<rect x="1060.500" y="343.500" width="61" height="68" fill="#f1f1f1" stroke="#a8a8a8"/>
<path d="M1070,359 L1086,355 L1110,361 L1104,382 L1090,398 L1075,384Z" fill="#dcdcdc" stroke="#b0b0b0" stroke-width="2"/>
<path d="M1077,363 L1092,358 L1105,364 L1090,372Z" fill="#fff" stroke="#555" stroke-width="1.500"/>
<path d="M1077,363 L1090,372 L1089,391 L1081,381Z" fill="#8f8f8f" stroke="#777"/>
<path d="M1090,372 L1105,364 L1102,380 L1089,391Z" fill="#bdbdbd" stroke="#777"/>
<rect x="1124.500" y="343.500" width="144" height="18" fill="#f0f0f0" stroke="#e0e0e0"/>
<rect x="1124.500" y="363.500" width="144" height="48" fill="#f0f0f0" stroke="#e0e0e0"/>
<rect x="1278" y="346" width="10" height="14" fill="#111"/>
<path d="M1280,348 H1286 L1283,351Z" fill="#fff"/><path d="M1280.500,355.500H1285.500M1283,353V358" stroke="#fff" stroke-width="1.500"/>
<rect x="1058" y="414" width="237" height="1" fill="#c4c4c4"/>
<rect x="1058" y="421" width="39" height="19" fill="#fff"/>
<text x="1064" y="433" font-size="11" textLength="28">Select</text>
<rect x="1097" y="423" width="36" height="17" fill="#efefef" stroke="#e2e2e2"/>
<text x="1102" y="435" font-size="11" textLength="18">Edit</text>
<rect x="1135" y="423" width="50" height="17" fill="#ececec" stroke="#e0e0e0"/>
<text x="1141" y="435" font-size="11" textLength="41">Statistics</text>
<rect x="1058" y="440" width="237" height="27" fill="#f2f2f2"/>
<rect x="1058" y="466" width="237" height="2" fill="#c8c8c8"/>
<rect x="1061" y="444" width="28" height="19" fill="#e8e8e8"/>
<g fill="none" stroke="#333" stroke-width=".9"><rect x="1070" y="450" width="3" height="2.500"/><rect x="1075" y="450" width="3" height="2.500"/><rect x="1070" y="455" width="3" height="2.500"/><rect x="1075" y="455" width="3" height="2.500"/></g>
<path d="M1081,454 H1085 L1083,456Z" fill="#111"/>
<rect x="1094" y="444" width="26" height="19" fill="#e8e8e8"/>
<path d="M1098,454 L1104.500,448 L1111,454 H1109 V460 H1106 V456 H1103 V460 H1100 V454Z" fill="#fff" stroke="#111"/>
<path d="M1117,449 H1127 L1122,455Z" fill="#111"/>
<rect x="1131.500" y="444.500" width="125" height="18" fill="#fff" stroke="#999"/>
<text x="1133" y="454" font-size="9" textLength="58" style="fill:#777">3D Warehouse</text>
<rect x="1257" y="444" width="17" height="19" fill="#f7f7f7" stroke="#bbb"/>
<circle cx="1266" cy="452" r="3" fill="none" stroke="#222" stroke-width="1.200"/><path d="M1264,454 L1261,458" stroke="#222" stroke-width="1.500"/>
<path d="M1281,448 H1285 L1290,453 L1285,459 H1281Z" fill="#111"/><rect x="1282" y="450" width="3" height="6" fill="#4a86c6"/>

<rect x="1058" y="468" width="237" height="165" fill="#fff"/>
<rect x="1064.500" y="475.500" width="63" height="63" fill="#fff" stroke="#a8a8a8"/>
<path d="M1066,485 L1089,478 L1125,494 L1103,505Z" fill="#d0d0d0"/>
<path d="M1066,485 L1103,505 L1101,535 L1071,517Z" fill="#e5e5e5"/>
<path d="M1103,505 L1125,494 L1126,519 L1101,535Z" fill="#e8e8e8"/>
<path d="M1066,485 L1089,478 L1125,494 L1126,519 L1101,535 L1071,517Z M1066,485 L1103,505 L1125,494 M1103,505 L1101,535" fill="none" stroke="#9a9a9a" stroke-width=".7"/>
<text x="1131" y="485" font-size="10" font-weight="bold" textLength="62" style="fill:#111">Component#1</text>
<text x="1131" y="497" font-size="9.500" textLength="9" style="fill:#333">by</text>
<text x="1142" y="497" font-size="9.500" font-style="italic" textLength="37" style="fill:#999">Unknown</text>
<text x="1131" y="508" font-size="9.500" font-style="italic" textLength="57" style="fill:#999">No Description</text>
<rect x="1060" y="632" width="235" height="1" fill="#bdbdbd"/>
<rect x="1058" y="633" width="237" height="21" fill="#fff"/>
<rect x="1276" y="633" width="19" height="19" fill="#f3f3f3"/>
<path d="M1067,642.500 L1072,638 V640.500 H1076 V645 H1072 V647.500Z" fill="#fff" stroke="#333" stroke-width="1.200"/>
<path d="M1289,642.500 L1284,638 V640.500 H1280 V645 H1284 V647.500Z" fill="#fff" stroke="#aaa" stroke-width="1.200"/>
<text x="1158" y="645" font-size="10.500" textLength="39" style="fill:#777">In Model</text>
<rect x="1058" y="653" width="237" height="2" fill="#c8c8c8"/>
<rect x="1058" y="655" width="237" height="179" fill="#f2f5fa"/>

<rect x="6" y="834" width="1289" height="63" fill="#efefef"/>
<rect x="6" y="834" width="294" height="37" fill="#f1f1f1"/>
<rect x="299.500" y="834" width="1" height="37" fill="#d2d2d2"/>
<rect x="6" y="870.500" width="294" height="1" fill="#d2d2d2"/>
<path d="M10,836 V868" stroke="#c0c0c0" stroke-dasharray="1 2"/>
<text x="18" y="857" font-size="11" textLength="73" style="fill:#333">Measurements</text>

<circle cx="18.500" cy="885" r="6" fill="#f0f0f0" stroke="#b3b3b3" stroke-width="1.200"/><path d="M16,882.500 A2.500 2.500 0 1 1 21,882.500 L19.500,888 H17.500Z" fill="#aaa"/>
<circle cx="46.500" cy="885" r="6" fill="#f0f0f0" stroke="#b3b3b3" stroke-width="1.200"/><circle cx="46.500" cy="882" r="1.300" fill="#999"/><rect x="45.500" y="884" width="2" height="5" fill="#999"/>
<circle cx="74.500" cy="885" r="7" fill="#111"/><circle cx="74.500" cy="882.500" r="2.700" fill="#fff"/><path d="M69.500,889 C70.500,885.500 78.500,885.500 79.500,889 C78,891 71,891 69.500,889Z" fill="#fff"/>
<rect x="91" y="880" width="1" height="10" fill="#999"/>
<text x="100" y="889" font-size="12.500" textLength="370" style="fill:#333">Select objects. Shift to extend select. Drag mouse to select multiple.</text>
<g fill="#aaa"><rect x="1290" y="888" width="2" height="2"/><rect x="1287" y="891" width="2" height="2"/><rect x="1290" y="891" width="2" height="2"/><rect x="1284" y="894" width="2" height="2"/><rect x="1287" y="894" width="2" height="2"/><rect x="1290" y="894" width="2" height="2"/></g>
</svg>
</body></html>
